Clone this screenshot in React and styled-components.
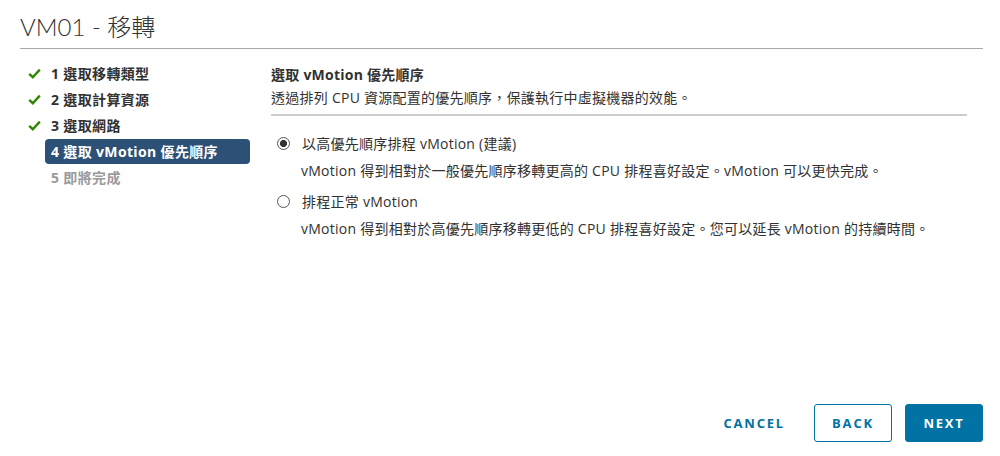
import React, { useState } from 'react'
import styled, { createGlobalStyle } from 'styled-components'

const GlobalStyle = createGlobalStyle`
  html, body {
    margin: 0;
    padding: 0;
    background: #fff;
  }
  body {
    font-family: "Open Sans", "Noto Sans CJK TC", sans-serif;
    color: #313131;
  }
`

const steps = [
    { n: 1, label: '選取移轉類型', state: 'done' },
    { n: 2, label: '選取計算資源', state: 'done' },
    { n: 3, label: '選取網路', state: 'done' },
    { n: 4, label: '選取 vMotion 優先順序', state: 'current' },
    { n: 5, label: '即將完成', state: 'todo' },
]

const options = [
    {
        id: 'high',
        label: '以高優先順序排程 vMotion (建議)',
        desc: 'vMotion 得到相對於一般優先順序移轉更高的 CPU 排程喜好設定。vMotion 可以更快完成。',
    },
    {
        id: 'normal',
        label: '排程正常 vMotion',
        desc: 'vMotion 得到相對於高優先順序移轉更低的 CPU 排程喜好設定。您可以延長 vMotion 的持續時間。',
    },
]

const Check = () => (
    <svg width="13" height="11" viewBox="0 0 13 11">
        <path d="M1.2 5.8 L4.8 9.2 L11.8 1.6" fill="none" stroke="#318700" strokeWidth="2.4" />
    </svg>
)

const App = () => {
    const [choice, setChoice] = useState('high')

    return (
        <Page>
            <GlobalStyle />
            <Title>VM01 - 移轉</Title>
            <Body>
                <Steps>
                    {steps.map(s => (
                        <Step key={s.n}>
                            <StepIcon>{s.state === 'done' && <Check />}</StepIcon>
                            <StepLabel $state={s.state}>{s.n} {s.label}</StepLabel>
                        </Step>
                    ))}
                </Steps>
                <Content>
                    <Heading>選取 vMotion 優先順序</Heading>
                    <Subtitle>透過排列 CPU 資源配置的優先順序，保護執行中虛擬機器的效能。</Subtitle>
                    <Divider />
                    {options.map(o => (
                        <Option key={o.id}>
                            <RadioRow onClick={() => setChoice(o.id)}>
                                <Radio $checked={choice === o.id} />
                                <span>{o.label}</span>
                            </RadioRow>
                            <OptionDesc>{o.desc}</OptionDesc>
                        </Option>
                    ))}
                </Content>
            </Body>
            <Footer>
                <Button $kind="flat">CANCEL</Button>
                <Button $kind="outline">BACK</Button>
                <Button $kind="primary">NEXT</Button>
            </Footer>
        </Page>
    )
}

const Page = styled.div`
    display: flex;
    flex-direction: column;
    height: 456px;
    padding: 0 17px 0 20px;
    box-sizing: border-box;
`

const Title = styled.h1`
    margin: 0;
    padding: 12px 0 6px;
    font-family: "Lato", "Noto Sans CJK TC", sans-serif;
    font-size: 24px;
    font-weight: 300;
    line-height: 30px;
    color: #313131;
    border-bottom: 1px solid #a8a8a8;
`

const Body = styled.div`
    flex: 1;
    display: flex;
    gap: 21px;
    padding-top: 11px;
`

const Steps = styled.ul`
    list-style: none;
    margin: 0;
    padding: 0;
    width: 230px;
    flex-shrink: 0;
`

const Step = styled.li`
    display: flex;
    align-items: center;
    height: 26px;
`

const StepIcon = styled.span`
    width: 25px;
    display: flex;
    justify-content: flex-end;
    padding-right: 4px;
    box-sizing: border-box;
`

const StepLabel = styled.span`
    flex: 1;
    height: 25px;
    line-height: 25px;
    padding: 0 6px;
    border-radius: 4px;
    font-size: 14px;
    font-weight: 700;
    letter-spacing: 0.35px;
    background: ${p => (p.$state === 'current' ? '#2d5076' : 'transparent')};
    color: ${p => (p.$state === 'current' ? '#fff' : p.$state === 'todo' ? '#9a9a9a' : '#313131')};
`

const Content = styled.div`
    flex: 1;
    padding-top: 4px;
    letter-spacing: 0.25px;
`

const Heading = styled.h2`
    margin: 0;
    font-size: 14px;
    font-weight: 700;
    line-height: 22px;
`

const Subtitle = styled.p`
    margin: 0;
    font-size: 14px;
    line-height: 24px;
`

const Divider = styled.hr`
    margin: 4px 16px 13px 0;
    border: none;
    border-top: 2px solid #cccccc;
`

const Option = styled.div`
    margin-bottom: 2px;
`

const RadioRow = styled.label`
    display: flex;
    align-items: center;
    gap: 12px;
    height: 28px;
    padding-left: 6px;
    font-size: 14px;
    cursor: pointer;
`

const Radio = styled.span`
    width: 13px;
    height: 13px;
    box-sizing: border-box;
    border-radius: 50%;
    border: 1px solid #555;
    background: ${p => (p.$checked ? 'radial-gradient(circle, #333 0 3.3px, #fff 3.8px)' : '#fff')};
`

const OptionDesc = styled.div`
    padding-left: 30px;
    font-size: 14px;
    line-height: 28px;
`

const Footer = styled.div`
    display: flex;
    justify-content: flex-end;
    align-items: center;
    gap: 13px;
    padding-bottom: 14px;
`

const Button = styled.button`
    height: 38px;
    min-width: 78px;
    padding: 0 12px;
    box-sizing: border-box;
    border-radius: 3px;
    font-family: "Open Sans", sans-serif;
    font-size: 13px;
    font-weight: 700;
    letter-spacing: 1.8px;
    cursor: pointer;
    border: 1px solid ${p => (p.$kind === 'flat' ? 'transparent' : '#0072a3')};
    background: ${p => (p.$kind === 'primary' ? '#0072a3' : '#fff')};
    color: ${p => (p.$kind === 'primary' ? '#fff' : '#0072a3')};
    margin-right: ${p => (p.$kind === 'flat' ? '3px' : '0')};
`

export default App
